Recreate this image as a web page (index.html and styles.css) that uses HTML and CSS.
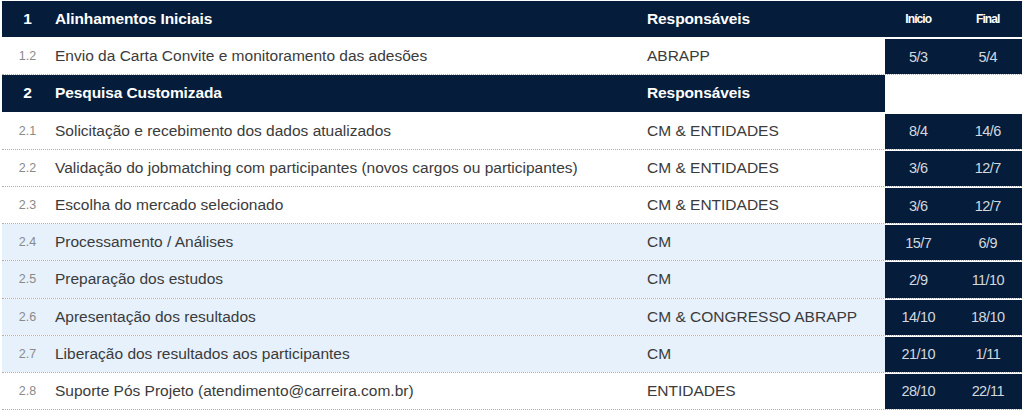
FILE: index.html
```html
<!DOCTYPE html>
<html lang="pt">
<head>
<meta charset="utf-8">
<link rel="stylesheet" href="styles.css">
</head>
<body>
<div class="table">
  <div class="row head full">
    <div class="num">1</div>
    <div class="task">Alinhamentos Iniciais</div>
    <div class="resp">Responsáveis</div>
    <div class="dates"><span class="small">Início</span><span class="small">Final</span></div>
  </div>
  <div class="row">
    <div class="num">1.2</div>
    <div class="task">Envio da Carta Convite e monitoramento das adesões</div>
    <div class="resp">ABRAPP</div>
    <div class="dates"><span>5/3</span><span>5/4</span></div>
  </div>
  <div class="row head">
    <div class="num">2</div>
    <div class="task">Pesquisa Customizada</div>
    <div class="resp">Responsáveis</div>
    <div class="blank"></div>
  </div>
  <div class="row">
    <div class="num">2.1</div>
    <div class="task">Solicitação e recebimento dos dados atualizados</div>
    <div class="resp">CM &amp; ENTIDADES</div>
    <div class="dates"><span>8/4</span><span>14/6</span></div>
  </div>
  <div class="row">
    <div class="num">2.2</div>
    <div class="task">Validação do jobmatching com participantes (novos cargos ou participantes)</div>
    <div class="resp">CM &amp; ENTIDADES</div>
    <div class="dates"><span>3/6</span><span>12/7</span></div>
  </div>
  <div class="row">
    <div class="num">2.3</div>
    <div class="task">Escolha do mercado selecionado</div>
    <div class="resp">CM &amp; ENTIDADES</div>
    <div class="dates"><span>3/6</span><span>12/7</span></div>
  </div>
  <div class="row tint">
    <div class="num">2.4</div>
    <div class="task">Processamento / Análises</div>
    <div class="resp">CM</div>
    <div class="dates"><span>15/7</span><span>6/9</span></div>
  </div>
  <div class="row tint">
    <div class="num">2.5</div>
    <div class="task">Preparação dos estudos</div>
    <div class="resp">CM</div>
    <div class="dates"><span>2/9</span><span>11/10</span></div>
  </div>
  <div class="row tint">
    <div class="num">2.6</div>
    <div class="task">Apresentação dos resultados</div>
    <div class="resp">CM &amp; CONGRESSO ABRAPP</div>
    <div class="dates"><span>14/10</span><span>18/10</span></div>
  </div>
  <div class="row tint">
    <div class="num">2.7</div>
    <div class="task">Liberação dos resultados aos participantes</div>
    <div class="resp">CM</div>
    <div class="dates"><span>21/10</span><span>1/11</span></div>
  </div>
  <div class="row">
    <div class="num">2.8</div>
    <div class="task">Suporte Pós Projeto (atendimento@carreira.com.br)</div>
    <div class="resp">ENTIDADES</div>
    <div class="dates"><span>28/10</span><span>22/11</span></div>
  </div>
</div>
</body>
</html>
```
FILE: styles.css
```css
* { box-sizing: border-box; }
html, body { margin: 0; padding: 0; background: #fff; }
body {
  width: 1024px;
  height: 411px;
  overflow: hidden;
  font-family: "Liberation Sans", Arial, sans-serif;
  color: #3b3b3b;
}
.table {
  display: flex;
  flex-direction: column;
  padding: 1px 2px 0 2px;
}
.row {
  display: grid;
  grid-template-columns: 53px 592px 238px 137px;
  height: 37.2px;
  border-bottom: 1px dotted #b0b0b0;
}
.row > div {
  display: flex;
  align-items: center;
}
.num {
  justify-content: center;
  font-size: 12.5px;
  color: #8a8a8a;
  padding-right: 2px;
}
.task, .resp {
  font-size: 15.5px;
  color: #3b3b3b;
}
.tint .num, .tint .task, .tint .resp { background: #e6f1fc; }
.dates {
  background: #051d3b;
  margin-top: 1px;
  display: grid !important;
  grid-template-columns: 1fr 1fr;
}
.dates span {
  text-align: center;
  font-size: 14.5px;
  color: #d3d8df;
  letter-spacing: -0.6px;
}
.dates span:first-child { padding-right: 2px; }
.head .num, .head .task, .head .resp { background: #051d3b; }
.head .num {
  font-size: 15.5px;
  font-weight: bold;
  color: #fff;
}
.head .task, .head .resp {
  font-weight: bold;
  color: #fff;
  letter-spacing: -0.1px;
}
.head { border-bottom: 1px solid #fff; }
.full .dates { margin-top: 0; }
.dates .small {
  font-size: 12px;
  font-weight: bold;
  color: #fff;
  letter-spacing: -0.9px;
}
.blank { background: #fff; }
```
